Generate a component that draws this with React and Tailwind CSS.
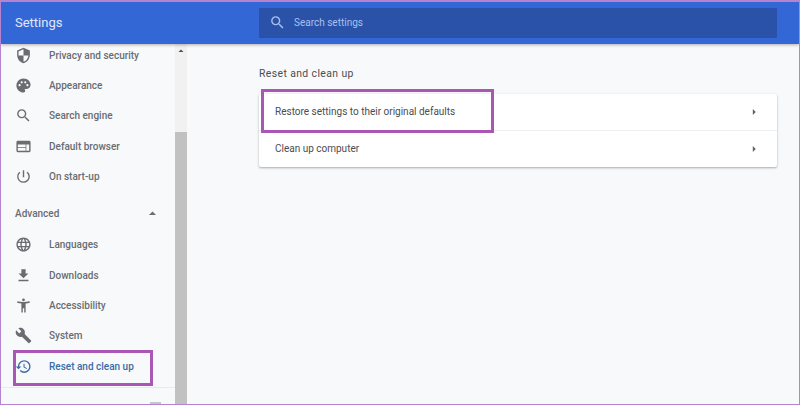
import { MdSecurity, MdPalette, MdSearch, MdWeb, MdPowerSettingsNew, MdLanguage, MdFileDownload, MdAccessibilityNew, MdBuild, MdRestore, MdArrowDropUp, MdArrowRight } from "react-icons/md";

const TOP_NAV = [
  { label: "Privacy and security", icon: MdSecurity },
  { label: "Appearance", icon: MdPalette },
  { label: "Search engine", icon: MdSearch },
  { label: "Default browser", icon: MdWeb },
  { label: "On start-up", icon: MdPowerSettingsNew },
];

const ADV_NAV = [
  { label: "Languages", icon: MdLanguage },
  { label: "Downloads", icon: MdFileDownload },
  { label: "Accessibility", icon: MdAccessibilityNew },
  { label: "System", icon: MdBuild },
  { label: "Reset and clean up", icon: MdRestore, active: true },
];

function NavRow({ label, icon: Icon, active }) {
  return (
    <div className={`flex items-center h-[30.4px] pl-[14px] ${active ? "text-[#3b6ca8]" : "text-[#696d72]"}`}>
      <Icon className="w-[17px] h-[17px] shrink-0" />
      <span className="ml-[17px] text-[10px] font-medium">{label}</span>
    </div>
  );
}

export default function App() {
  return (
    <div className="w-[800px] h-[405px] overflow-hidden flex flex-col bg-[#f8f9fa] border border-t-2 border-[#b583cf] font-['Roboto',sans-serif] relative">
      {/* Header */}
      <header className="h-[42px] shrink-0 bg-[#3367d6] flex items-center shadow-[0_1px_3px_rgba(0,0,0,0.3)] z-10">
        <div className="w-[258px] pl-[14px] text-white/85 text-[13px]">Settings</div>
        <div className="w-[518px] h-[30px] -mt-[1px] bg-[#2a52a8] rounded-[1px] flex items-center pl-[10px] text-[#a9c0ee]">
          <MdSearch className="w-[17px] h-[17px]" />
          <span className="ml-[8px] text-[10px]">Search settings</span>
        </div>
      </header>

      <div className="flex-1 flex min-h-0">
        {/* Sidebar */}
        <aside className="w-[174px] shrink-0 flex flex-col">
          <nav className="-mt-[4px]">
            {TOP_NAV.map((item) => <NavRow key={item.label} {...item} />)}
          </nav>
          <div className="flex items-center justify-between h-[31.6px] mt-[6px] pl-[14px] pr-[14px] text-[#696d72]">
            <span className="text-[10px] font-medium">Advanced</span>
            <MdArrowDropUp className="w-[17px] h-[17px]" />
          </div>
          <nav>
            {ADV_NAV.map((item) => <NavRow key={item.label} {...item} />)}
          </nav>
          <div className="mt-[5px] border-t border-[#e8eaed]" />
          <div className="mt-[14px] ml-[149px] w-[11px] h-[2px] bg-[#c4c6c9]" />
        </aside>

        {/* Scrollbar */}
        <div className="w-[12px] shrink-0 bg-[#f1f1f1] flex flex-col">
          <MdArrowDropUp className="w-[12px] h-[12px] mt-[1px] text-[#505050]" />
          <div className="mt-[75px] flex-1 bg-[#c1c1c1]" />
        </div>

        {/* Main */}
        <main className="flex-1 pl-[72px] pr-[22px] pt-[23px]">
          <h2 className="text-[10.4px] leading-[14px] text-[#4a4d51] tracking-[0.4px]">Reset and clean up</h2>
          <div className="mt-[13px] bg-white rounded-[2px] shadow-[0_1px_2px_rgba(60,64,67,0.3),0_1px_3px_rgba(60,64,67,0.15)]">
            <div className="h-[36.5px] flex items-center justify-between px-[16px] text-[#4a4d51] border-b border-[#eeeff1]">
              <span className="text-[10px]">Restore settings to their original defaults</span>
              <MdArrowRight className="w-[14px] h-[14px] text-[#5f6368]" />
            </div>
            <div className="h-[36px] flex items-center justify-between px-[16px] text-[#4a4d51]">
              <span className="text-[10px]">Clean up computer</span>
              <MdArrowRight className="w-[14px] h-[14px] text-[#5f6368]" />
            </div>
          </div>
        </main>
      </div>

      {/* Annotation boxes */}
      <div className="absolute left-[12px] top-[348px] w-[140px] h-[36px] border-[3px] border-[#a956b5]" />
      <div className="absolute left-[260px] top-[87px] w-[233px] h-[44px] border-[3px] border-[#a956b5]" />
    </div>
  );
}
